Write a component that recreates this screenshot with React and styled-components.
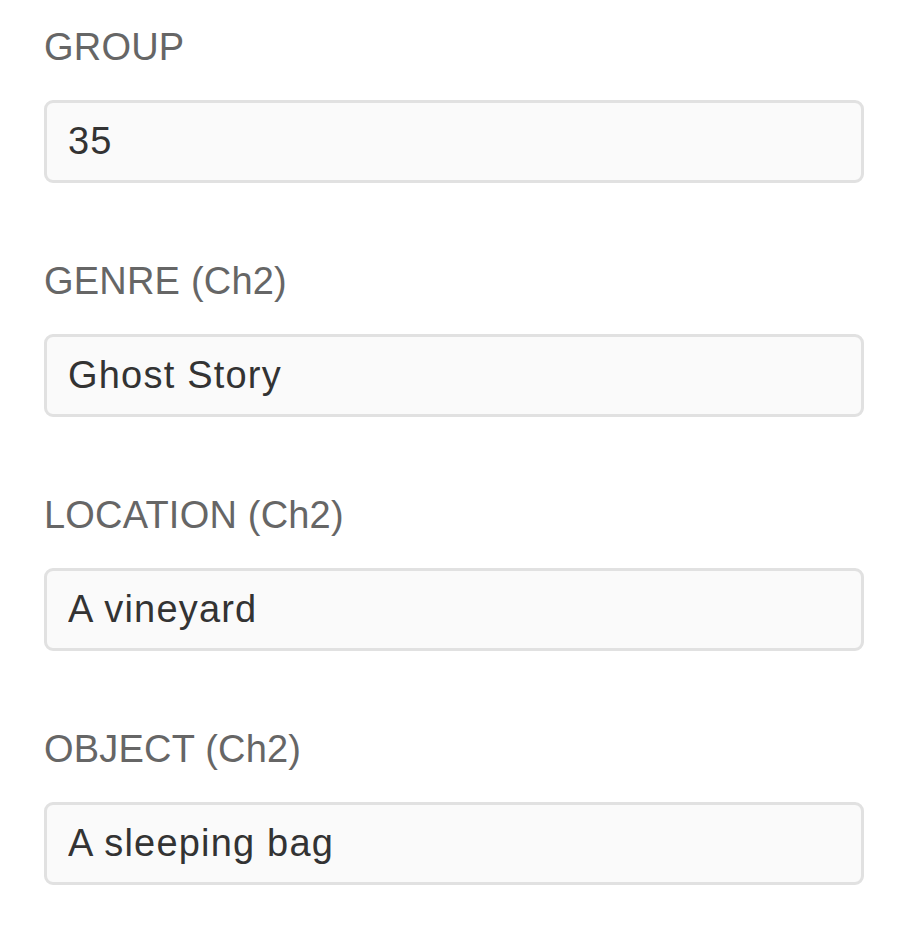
import React from "react";
import styled, { createGlobalStyle } from "styled-components";

const Global = createGlobalStyle`
  html, body { margin: 0; padding: 0; background: #ffffff; }
  body { font-family: "Liberation Sans", Arial, sans-serif; }
`;

const Form = styled.form`
  display: flex;
  flex-direction: column;
  gap: 76px;
  padding: 25px 37px 0 44px;
  width: 820px;
`;

const Field = styled.div`
  display: flex;
  flex-direction: column;
  gap: 31px;
`;

const Label = styled.label`
  font-family: "Liberation Sans", Arial, sans-serif;
  font-size: 38px;
  line-height: 44px;
  height: 44px;
  color: #666666;
  letter-spacing: 0.2px;
`;

const Input = styled.input`
  box-sizing: border-box;
  width: 820px;
  height: 83px;
  margin: 0;
  border: 3px solid #e1e1e1;
  border-radius: 9px;
  background: #fafafa;
  padding: 0 21px;
  font-family: "Liberation Sans", Arial, sans-serif;
  font-size: 38px;
  color: #333333;
  letter-spacing: 1.2px;
  outline: none;
`;

const fields = [
  { id: "group", label: "GROUP", value: "35" },
  { id: "genre", label: "GENRE (Ch2)", value: "Ghost Story" },
  { id: "location", label: "LOCATION (Ch2)", value: "A vineyard" },
  { id: "object", label: "OBJECT (Ch2)", value: "A sleeping bag" },
];

export default function App() {
  return (
    <>
      <Global />
      <Form onSubmit={(e) => e.preventDefault()}>
        {fields.map((f) => (
          <Field key={f.id}>
            <Label htmlFor={f.id}>{f.label}</Label>
            <Input id={f.id} type="text" defaultValue={f.value} readOnly />
          </Field>
        ))}
      </Form>
    </>
  );
}
